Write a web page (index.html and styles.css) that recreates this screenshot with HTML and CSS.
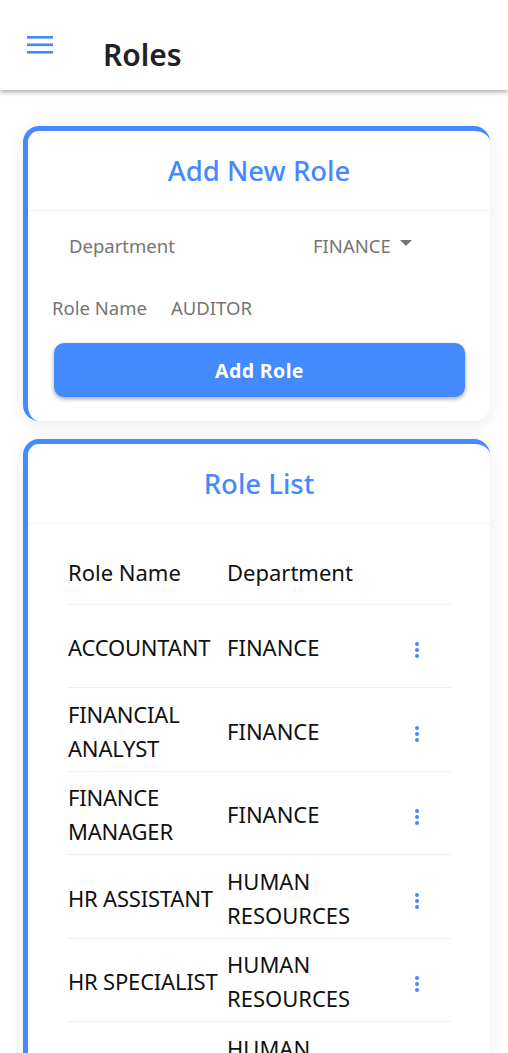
FILE: index.html
```html
<!DOCTYPE html>
<html>
<head>
<meta charset="utf-8">
<link rel="stylesheet" href="styles.css">
</head>
<body>
<header class="topbar">
  <button class="menu-btn" aria-label="menu">
    <svg width="28" height="20" viewBox="0 0 28 20"><rect x="0" y="1" width="26" height="2.6" fill="#448aff"/><rect x="0" y="8.5" width="26" height="2.6" fill="#448aff"/><rect x="0" y="16" width="26" height="2.6" fill="#448aff"/></svg>
  </button>
  <h1 class="page-title">Roles</h1>
</header>

<main class="content">
  <section class="card">
    <h2 class="card-title">Add New Role</h2>
    <div class="card-body">
      <div class="field field-dept">
        <span class="label">Department</span>
        <span class="select">FINANCE <span class="caret"></span></span>
      </div>
      <div class="field field-role">
        <span class="label">Role Name</span>
        <span class="value">AUDITOR</span>
      </div>
      <button class="add-btn">Add Role</button>
    </div>
  </section>

  <section class="card">
    <h2 class="card-title">Role List</h2>
    <div class="table-wrap">
      <table class="roles">
        <thead>
          <tr><th>Role Name</th><th>Department</th><th></th></tr>
        </thead>
        <tbody>
          <tr><td>ACCOUNTANT</td><td>FINANCE</td><td class="act"><span class="dots"><i></i><i></i><i></i></span></td></tr>
          <tr><td>FINANCIAL ANALYST</td><td>FINANCE</td><td class="act"><span class="dots"><i></i><i></i><i></i></span></td></tr>
          <tr><td>FINANCE MANAGER</td><td>FINANCE</td><td class="act"><span class="dots"><i></i><i></i><i></i></span></td></tr>
          <tr><td>HR ASSISTANT</td><td>HUMAN RESOURCES</td><td class="act"><span class="dots"><i></i><i></i><i></i></span></td></tr>
          <tr><td>HR SPECIALIST</td><td>HUMAN RESOURCES</td><td class="act"><span class="dots"><i></i><i></i><i></i></span></td></tr>
          <tr><td>HR MANAGER</td><td>HUMAN RESOURCES</td><td class="act"><span class="dots"><i></i><i></i><i></i></span></td></tr>
        </tbody>
      </table>
    </div>
  </section>
</main>
</body>
</html>
```

FILE: styles.css
```css
* { box-sizing: border-box; }
html, body { margin: 0; padding: 0; }
body {
  background: #fff;
  font-family: "Noto Sans", "Open Sans", sans-serif;
  color: #111;
  overflow: hidden;
  height: 1053px;
}
.topbar {
  height: 90px;
  display: flex;
  align-items: center;
  background: #fff;
  box-shadow: 0 2px 5px rgba(0,0,0,0.35);
  position: relative;
  z-index: 2;
}
.menu-btn {
  border: 0;
  background: none;
  padding: 0;
  margin: 0 0 0 27px;
  width: 28px;
  height: 20px;
  align-self: flex-start;
  margin-top: 35px;
}
.menu-btn svg { display: block; }
.page-title {
  margin: 0 0 0 48px;
  font-size: 30px;
  font-weight: 600;
  color: #222;
  padding-top: 18px;
}
.content {
  padding: 36px 18px 0 23px;
  display: flex;
  flex-direction: column;
  gap: 18px;
}
.card {
  background: #fff;
  border-left: 5px solid #448aff;
  border-top: 5px solid #448aff;
  border-radius: 16px;
  box-shadow: 0 4px 18px rgba(0,0,0,0.08);
}
.card-title {
  margin: 0;
  height: 80px;
  display: flex;
  align-items: center;
  justify-content: center;
  font-size: 27.5px;
  font-weight: 500;
  color: #448aff;
  border-bottom: 1px solid #f2f2f2;
}
.card-body {
  padding: 12px 25px 24px 26px;
}
.field {
  display: flex;
  align-items: center;
  height: 44px;
  color: #757575;
  font-size: 18.5px;
}
.field-dept { padding-left: 15px; margin-bottom: 18px; }
.field-dept .label { width: 244px; }
.field-role { margin-left: -2px; margin-bottom: 14px; }
.field-role .label { width: 119px; }
.select { display: inline-flex; align-items: center; gap: 9px; }
.caret {
  width: 0; height: 0;
  border-left: 6.5px solid transparent;
  border-right: 6.5px solid transparent;
  border-top: 6.5px solid #757575;
  margin-top: -4px;
}
.add-btn {
  display: block;
  width: 100%;
  height: 54px;
  border: 0;
  border-radius: 10px;
  background: #448aff;
  color: #fff;
  font-family: inherit;
  font-size: 19.5px;
  font-weight: 700;
  letter-spacing: 0.4px;
  box-shadow: 0 2px 4px rgba(0,0,0,0.35);
}
.table-wrap {
  padding: 16px 39px 0 40px;
}
.roles {
  width: 100%;
  border-collapse: collapse;
  font-size: 22px;
  color: #111;
}
.roles th {
  text-align: left;
  font-weight: 400;
  height: 64px;
  border-bottom: 1px solid #efefef;
  padding: 0;
}
.roles th:first-child { width: 159px; }
.roles td {
  height: 83.5px;
  padding: 3px 0 0;
  line-height: 34px;
  border-bottom: 1px solid #efefef;
  vertical-align: middle;
}
.roles td:first-child { padding-right: 4px; letter-spacing: -0.2px; }
.roles td:nth-child(2) { width: 170px; }
.roles td.act { text-align: left; padding-left: 18px; }
.dots {
  display: inline-flex;
  flex-direction: column;
  gap: 2px;
  vertical-align: middle;
}
.dots i {
  display: block;
  width: 4px;
  height: 4px;
  border-radius: 50%;
  background: #448aff;
}
```
